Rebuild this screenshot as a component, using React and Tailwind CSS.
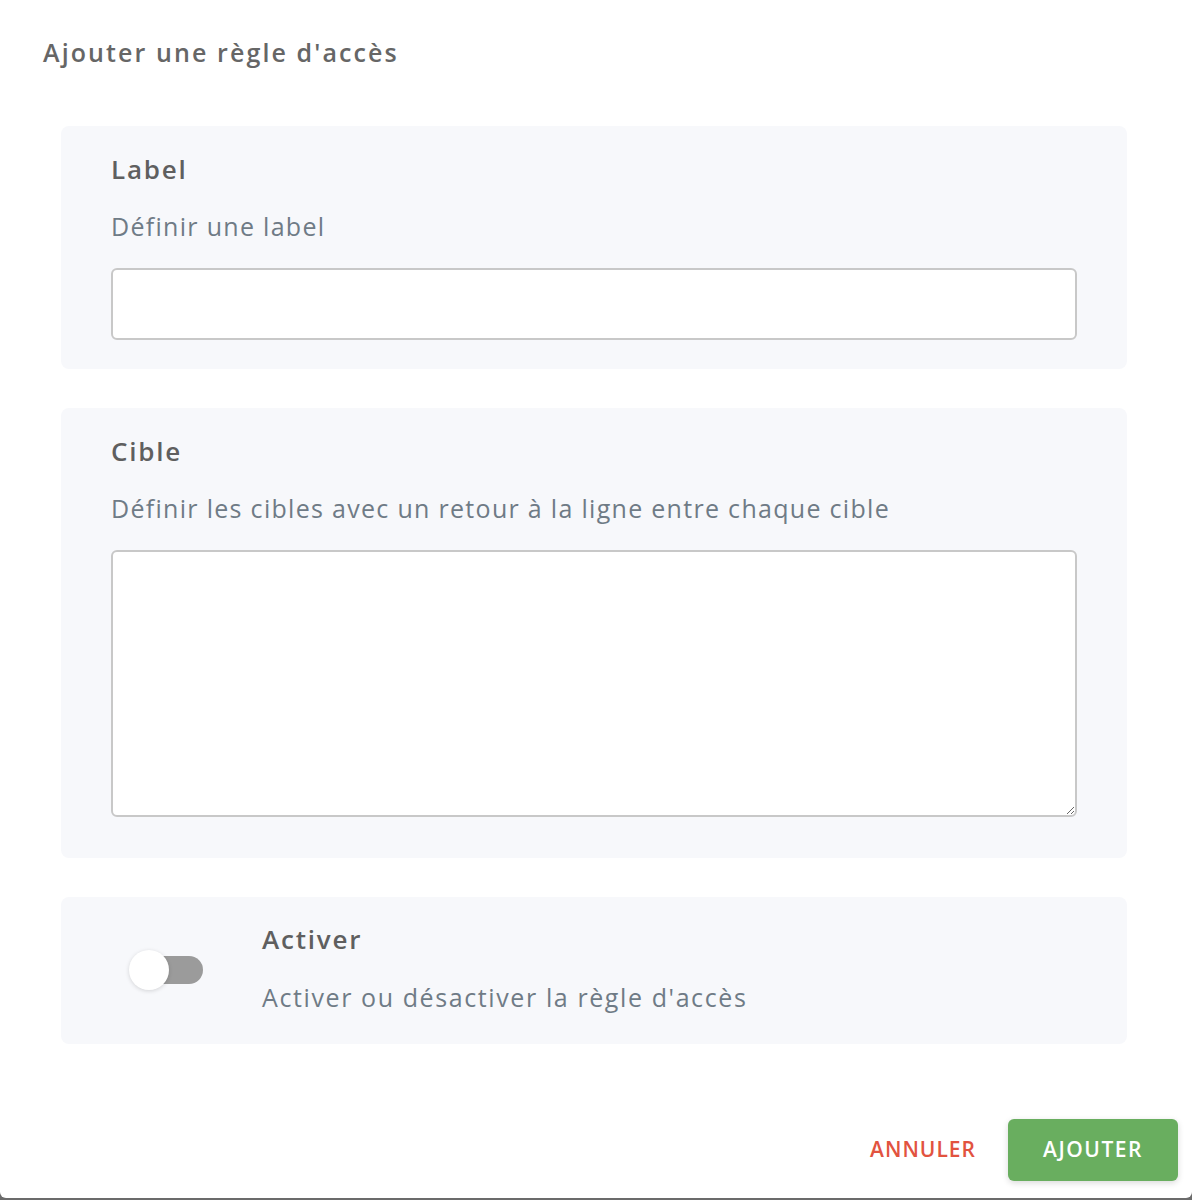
import React, { useState } from 'react';

const Section = ({ children, className = '' }) => (
  <div className={`rounded-lg bg-[#f7f8fb] ${className}`}>{children}</div>
);

export default function App() {
  const [enabled, setEnabled] = useState(false);

  return (
    <div className="min-h-[1200px] w-full bg-[#6b6b6b]" style={{ fontFamily: '"Open Sans", "Noto Sans", sans-serif' }}>
      <div className="flex h-[1198px] w-full flex-col rounded-b-[6px] bg-white">
        {/* header */}
        <h2 className="pl-[43px] pt-[34px] text-[25px] font-semibold leading-[36px] tracking-[2.1px] text-[#666666]">
          Ajouter une règle d'accès
        </h2>

        <div className="mt-[56px] flex flex-col gap-[39px] pl-[61px] pr-[65px]">
          <Section className="px-[50px] pb-[29px]">
            <div className="pt-[25px]">
              <div className="text-[26px] font-semibold leading-[36px] tracking-[1.8px] text-[#5f5f5f]">Label</div>
              <div className="mt-[21px] text-[25px] leading-[36px] tracking-[1.3px] text-[#6f7b86]">Définir une label</div>
              <input
                type="text"
                className="mt-[24px] block h-[72px] w-full rounded-[6px] border-2 border-[#c8c8c8] bg-white px-3 outline-none"
              />
            </div>
          </Section>

          <Section className="px-[50px] pb-[41px]">
            <div className="pt-[25px]">
              <div className="text-[26px] font-semibold leading-[36px] tracking-[1.8px] text-[#5f5f5f]">Cible</div>
              <div className="mt-[21px] text-[25px] leading-[36px] tracking-[1.3px] text-[#6f7b86]">
                Définir les cibles avec un retour à la ligne entre chaque cible
              </div>
              <textarea className="mt-[24px] block h-[267px] w-full rounded-[6px] border-2 border-[#c8c8c8] bg-white px-3 py-2 outline-none" />
            </div>
          </Section>

          <Section className="flex items-center pb-[29px] pt-[24px]">
            <div className="flex w-[201px] justify-center pl-[28px]">
              <button
                type="button"
                onClick={() => setEnabled((v) => !v)}
                className="relative mt-[4px] h-[28px] w-[55px] rounded-full bg-[#9b9b9b]"
                aria-pressed={enabled}
              >
                <span className="absolute left-[-19px] top-[-6px] h-[40px] w-[40px] rounded-full bg-white shadow-[0_1px_4px_rgba(0,0,0,0.15)]" />
              </button>
            </div>
            <div>
              <div className="text-[26px] font-semibold leading-[36px] tracking-[1.8px] text-[#5f5f5f]">Activer</div>
              <div className="mt-[22px] text-[25px] leading-[36px] tracking-[1.6px] text-[#6f7b86]">
                Activer ou désactiver la règle d'accès
              </div>
            </div>
          </Section>
        </div>

        {/* footer */}
        <div className="mt-auto flex items-center justify-end gap-[32px] pb-[17px] pr-[14px]">
          <button type="button" className="text-[21px] font-semibold tracking-[1px] text-[#e2533f]">
            ANNULER
          </button>
          <button
            type="button"
            className="h-[62px] w-[170px] rounded-[6px] bg-[#69ae5f] text-[21px] font-semibold tracking-[1.5px] text-white shadow-[0_2px_6px_rgba(0,0,0,0.15)]"
          >
            AJOUTER
          </button>
        </div>
      </div>
    </div>
  );
}
